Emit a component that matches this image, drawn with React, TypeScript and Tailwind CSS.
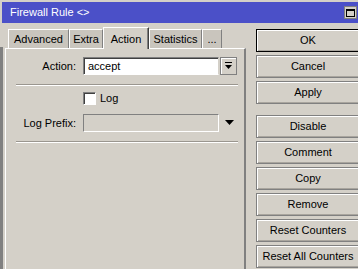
import React from "react";

const font = "font-['Liberation_Sans',Arial,sans-serif]";

function Tab({ label, active, w }: { label: string; active?: boolean; w: string }) {
  if (active) {
    return (
      <div
        className={`${w} h-[22px] -mb-[1px] relative z-10 bg-[#d4d0c8] border-t border-l border-white border-r border-r-[#404040] shadow-[inset_-1px_0_0_#808080] flex items-start justify-center pt-[3px] text-[11px] text-black`}
      >
        {label}
      </div>
    );
  }
  return (
    <div
      className={`${w} h-[19px] self-end bg-[#c9c5bd] border-t border-l border-white border-r border-r-[#808080] flex items-center justify-center text-[11px] text-black`}
    >
      {label}
    </div>
  );
}

function Btn({ label, primary }: { label: string; primary?: boolean }) {
  return (
    <div
      className={`w-[104px] h-[23px] shrink-0 flex items-center justify-center text-[11px] text-black bg-[#d4d0c8] border ${
        primary ? "border-black" : "border-[#808080]"
      } shadow-[inset_1px_1px_0_#ffffff,inset_-1px_-1px_0_#a9a59e]`}
    >
      {label}
    </div>
  );
}

function Separator() {
  return <div className="ml-[10px] w-[222px] h-[2px] border-t border-[#9a968f] border-b border-b-white" />;
}

export default function App() {
  return (
    <div className={`w-[358px] h-[269px] overflow-hidden bg-[#d4d0c8] flex flex-col ${font}`}>
      {/* title bar */}
      <div className="h-[23px] shrink-0 border-t-2 border-l-2 border-[#d4d0c8] bg-[#4b50c8] flex items-center justify-between">
        <span className="pl-[8px] text-[11px] text-white">Firewall Rule &lt;&gt;</span>
        <div className="flex items-center gap-[2px] -mr-[14px]">
          <div className="w-[13px] h-[13px] bg-[#d4d0c8] border border-[#808080] flex items-center justify-center">
            <div className="w-[9px] h-[8px] border border-black border-t-2" />
          </div>
          <div className="w-[13px] h-[13px] bg-[#d4d0c8] border border-[#808080] flex items-center justify-center">
            <svg width="9" height="8" viewBox="0 0 9 8">
              <path d="M1 0 L8 7 M8 0 L1 7" stroke="#000" strokeWidth="1.6" />
            </svg>
          </div>
        </div>
      </div>

      <div className="flex flex-1 min-h-0">
        {/* left frame */}
        <div className="w-[3px] shrink-0 bg-[#808080] mt-[24px]" />
        <div className="w-[2px] shrink-0" />

        {/* tab area */}
        <div className="w-[241px] shrink-0 flex flex-col pt-[3px]">
          <div className="flex h-[22px] pl-[3px] items-end">
            <Tab label="Advanced" w="w-[61px]" />
            <Tab label="Extra" w="w-[34px]" />
            <Tab label="Action" active w="w-[46px]" />
            <Tab label="Statistics" w="w-[53px]" />
            <Tab label="..." w="w-[20px]" />
          </div>
          <div className="flex-1 border-t border-l border-white border-r-2 border-r-[#808080] text-[11px] text-black">
            <div className="flex items-center mt-[8px] h-[18px]">
              <div className="w-[70px] text-right">Action:</div>
              <div className="ml-[7px] w-[136px] h-[18px] bg-white border border-t-[#808080] border-l-[#808080] border-b-white border-r-[#d4d0c8] shadow-[inset_1px_1px_0_#404040] flex items-center pl-[4px]">
                accept
              </div>
              <div className="ml-[1px] w-[17px] h-[18px] bg-[#d4d0c8] border border-[#808080] shadow-[inset_1px_1px_0_#ffffff] flex items-center justify-center">
                <svg width="9" height="9" viewBox="0 0 9 9">
                  <rect x="1" y="0" width="7" height="1" fill="#000" />
                  <polygon points="1,3 8,3 4.5,7" fill="#000" />
                </svg>
              </div>
            </div>
            <div className="mt-[9px]">
              <Separator />
            </div>
            <div className="flex items-center mt-[6px] h-[13px] pl-[77px]">
              <div className="w-[13px] h-[13px] bg-white border border-t-[#808080] border-l-[#808080] border-b-white border-r-white shadow-[inset_1px_1px_0_#404040]" />
              <span className="ml-[4px]">Log</span>
            </div>
            <div className="flex items-center mt-[9px] h-[18px]">
              <div className="w-[70px] text-right">Log Prefix:</div>
              <div className="ml-[7px] w-[136px] h-[18px] bg-[#d4d0c8] border border-t-[#808080] border-l-[#808080] border-b-white border-r-white" />
              <svg className="ml-[6px]" width="9" height="6" viewBox="0 0 9 6">
                <polygon points="0,0 9,0 4.5,5" fill="#000" />
              </svg>
            </div>
            <div className="mt-[9px]">
              <Separator />
            </div>
          </div>
        </div>

        {/* buttons */}
        <div className="ml-[10px] pt-[6px] flex flex-col gap-[3px]">
          <Btn label="OK" primary />
          <Btn label="Cancel" />
          <Btn label="Apply" />
          <div className="h-[5px] shrink-0" />
          <Btn label="Disable" />
          <Btn label="Comment" />
          <Btn label="Copy" />
          <Btn label="Remove" />
          <Btn label="Reset Counters" />
          <Btn label="Reset All Counters" />
        </div>
      </div>
    </div>
  );
}
